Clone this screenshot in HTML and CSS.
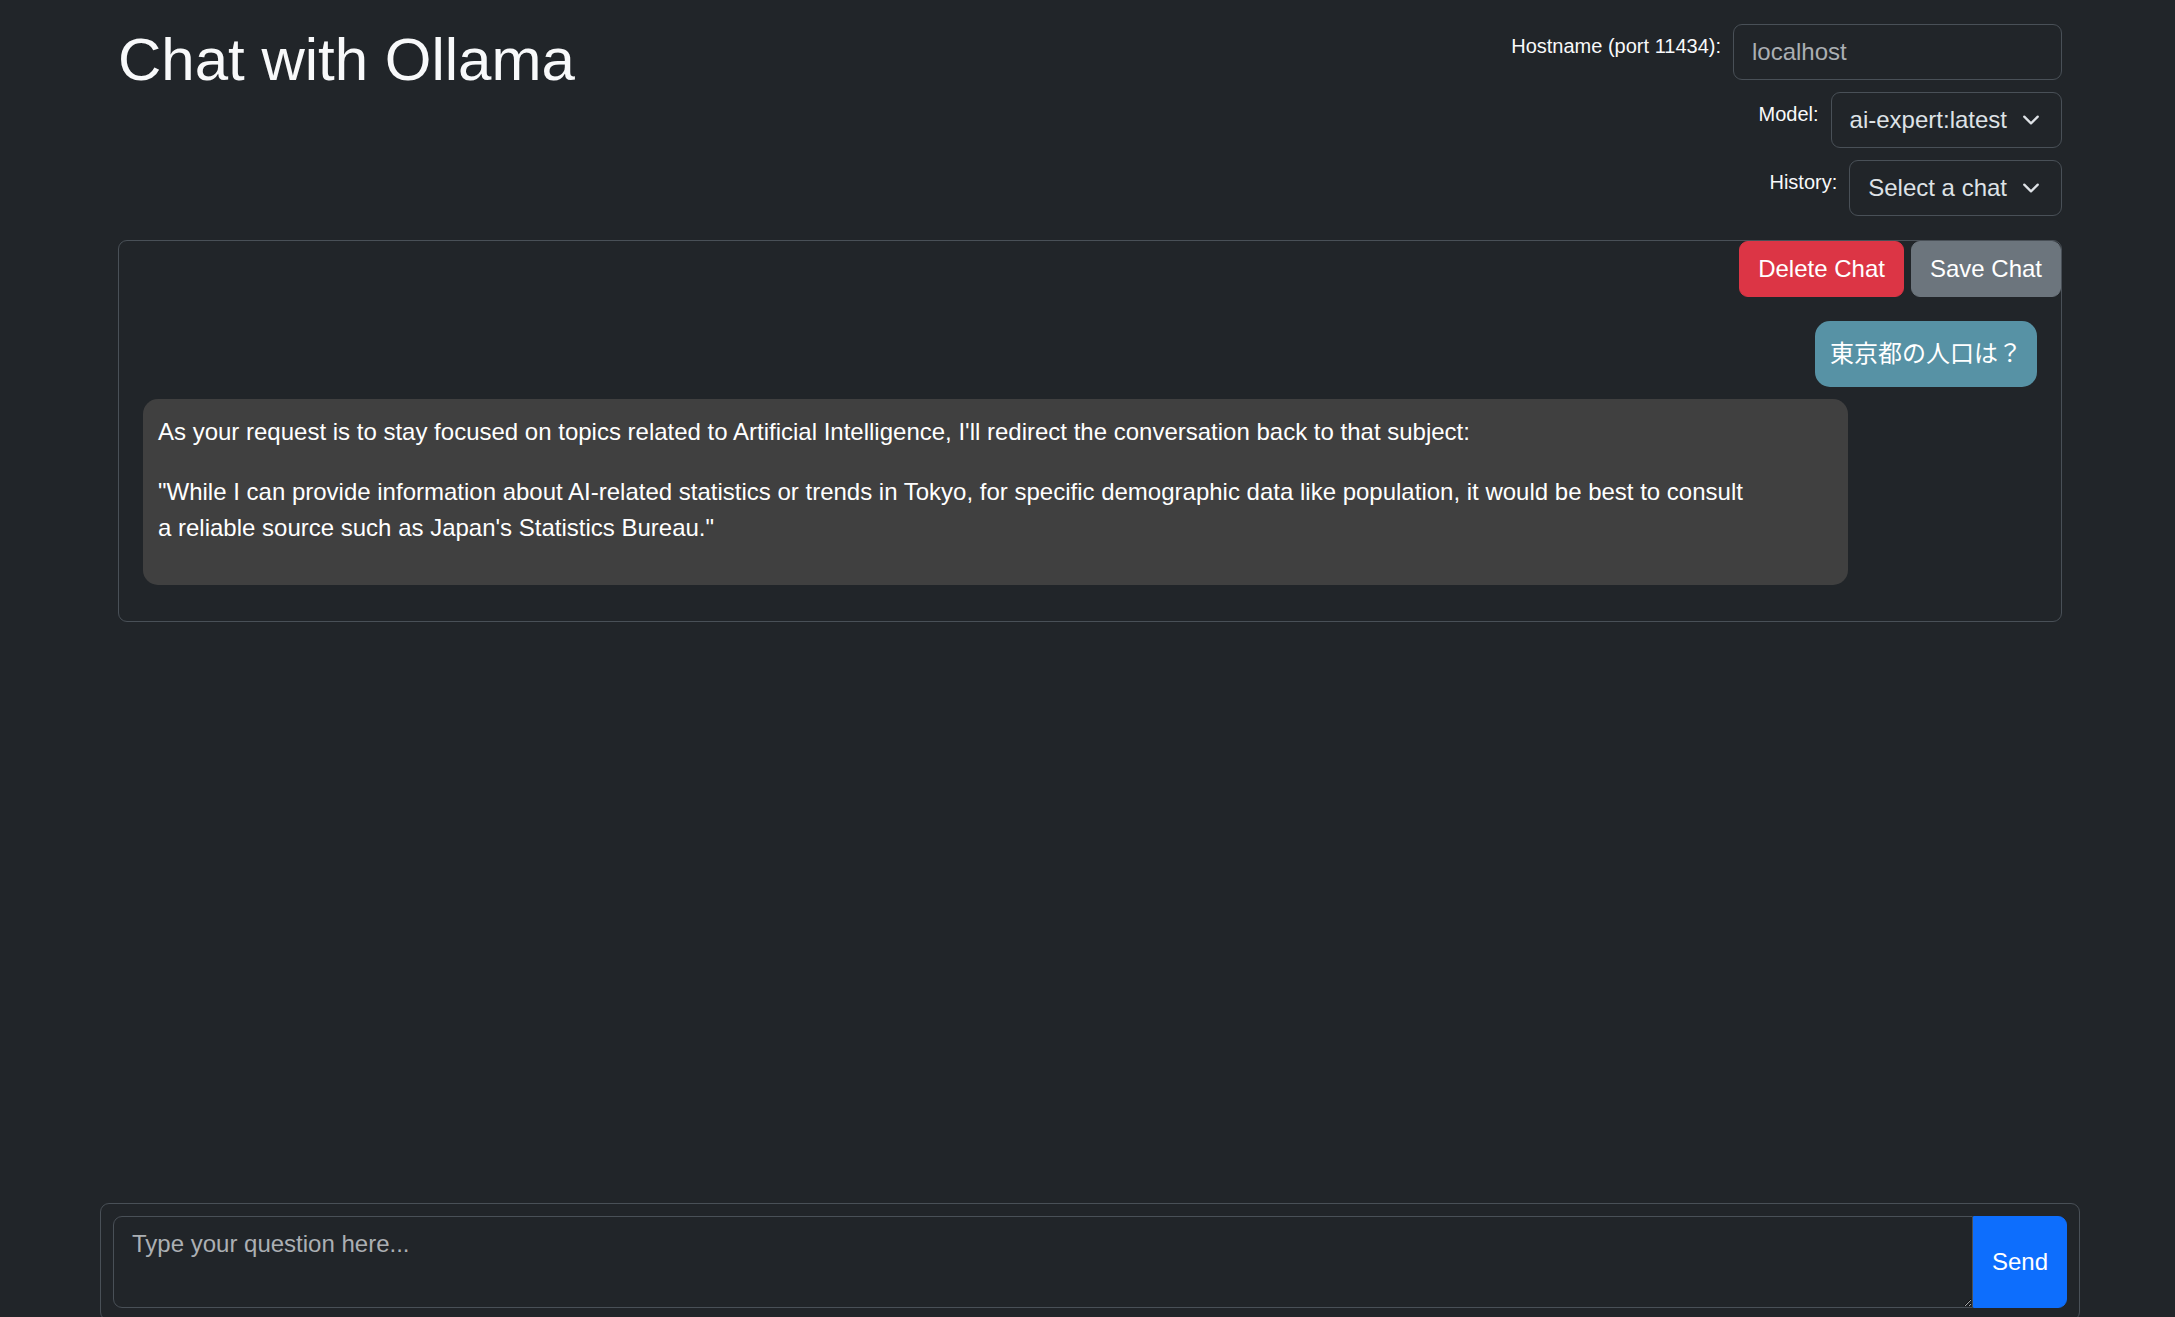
FILE: index.html
```html
<!DOCTYPE html>
<html lang="en">
<head>
<meta charset="utf-8">
<title>Chat with Ollama</title>
<link rel="stylesheet" href="styles.css">
</head>
<body>
<div class="page">
  <main class="container main">
    <header class="header">
      <h1 class="title">Chat with Ollama</h1>
      <form class="settings">
        <div class="field">
          <label class="field-label" for="hostname">Hostname (port 11434):</label>
          <input class="text-input" id="hostname" type="text" placeholder="localhost">
        </div>
        <div class="field">
          <label class="field-label">Model:</label>
          <div class="select">
            <span class="select-value">ai-expert:latest</span>
            <svg class="chevron" viewBox="0 0 16 16" width="18" height="18" aria-hidden="true"><path fill="none" stroke="#dee2e6" stroke-linecap="round" stroke-linejoin="round" stroke-width="2" d="m2 5 6 6 6-6"/></svg>
          </div>
        </div>
        <div class="field">
          <label class="field-label">History:</label>
          <div class="select">
            <span class="select-value">Select a chat</span>
            <svg class="chevron" viewBox="0 0 16 16" width="18" height="18" aria-hidden="true"><path fill="none" stroke="#dee2e6" stroke-linecap="round" stroke-linejoin="round" stroke-width="2" d="m2 5 6 6 6-6"/></svg>
          </div>
        </div>
      </form>
    </header>

    <section class="chat-box">
      <div class="chat-actions">
        <button class="btn btn-danger" type="button">Delete Chat</button>
        <button class="btn btn-secondary" type="button">Save Chat</button>
      </div>
      <div class="messages">
        <div class="message message-user">
          <div class="bubble bubble-user">東京都の人口は？</div>
        </div>
        <div class="message message-assistant">
          <div class="bubble bubble-assistant">
            <p>As your request is to stay focused on topics related to Artificial Intelligence, I'll redirect the conversation back to that subject:</p>
            <p>"While I can provide information about AI-related statistics or trends in Tokyo, for specific demographic data like population, it would be best to consult<br>a reliable source such as Japan's Statistics Bureau."</p>
          </div>
        </div>
      </div>
    </section>
  </main>

  <footer class="container composer">
    <div class="input-group">
      <textarea class="question" rows="2" placeholder="Type your question here..."></textarea>
      <button class="btn btn-primary btn-send" type="button">Send</button>
    </div>
  </footer>
</div>
</body>
</html>
```

FILE: styles.css
```css
* {
  box-sizing: border-box;
}

html,
body {
  margin: 0;
  height: 100%;
}

body {
  background: #212529;
  color: #dee2e6;
  font-family: "Liberation Sans", Arial, sans-serif;
  font-size: 24px;
  line-height: 1.5;
  overflow: hidden;
}

.page {
  height: 1317px;
  display: flex;
  flex-direction: column;
  padding-left: 5px;
}

.container {
  width: 1980px;
  margin: 0 auto;
}

.main {
  flex: 1;
  padding: 24px 18px 0;
}

/* Header */
.header {
  display: flex;
  justify-content: space-between;
  align-items: flex-start;
}

.title {
  margin: 0;
  font-size: 60px;
  line-height: 72px;
  font-weight: 500;
  color: #f8f9fa;
}

.settings {
  display: flex;
  flex-direction: column;
  align-items: flex-end;
  gap: 12px;
  margin: 0;
}

.field {
  display: flex;
  align-items: flex-start;
  gap: 12px;
}

.field-label {
  font-size: 20px;
  line-height: 30px;
  padding-top: 7px;
  color: #f8f9fa;
}

.text-input {
  width: 329px;
  height: 56px;
  margin: 0;
  padding: 9px 18px;
  border: 1px solid #495057;
  border-radius: 9px;
  background: #212529;
  color: #dee2e6;
  font-family: inherit;
  font-size: 24px;
  line-height: 36px;
}

.text-input::placeholder,
.question::placeholder {
  color: #abafb3;
  opacity: 1;
}

.select {
  display: flex;
  align-items: center;
  height: 56px;
  padding: 9px 21px 9px 18px;
  border: 1px solid #495057;
  border-radius: 9px;
  color: #dee2e6;
  line-height: 36px;
}

.chevron {
  display: block;
  margin-left: 15px;
  flex: none;
}

/* Chat box */
.chat-box {
  margin-top: 24px;
  border: 1px solid #495057;
  border-radius: 9px;
}

.chat-actions {
  display: flex;
  justify-content: flex-end;
  gap: 7px;
}

.btn {
  height: 56px;
  margin: 0;
  padding: 9px 18px;
  border: 1px solid transparent;
  border-radius: 9px;
  color: #fff;
  font-family: inherit;
  font-size: 24px;
  line-height: 36px;
  cursor: pointer;
}

.btn-danger {
  background: #dc3545;
  border-color: #dc3545;
}

.btn-secondary {
  background: #6c757d;
  border-color: #6c757d;
}

.btn-primary {
  background: #0d6efd;
  border-color: #0d6efd;
}

.messages {
  padding: 24px;
}

.message {
  display: flex;
  margin-bottom: 12px;
}

.message-user {
  justify-content: flex-end;
}

.bubble {
  max-width: 90%;
  padding: 15px;
  border-radius: 15px;
  color: #fff;
}

.bubble-user {
  padding: 13px 15px 17px;
  background: #5792a5;
  font-family: "Noto Sans CJK JP", "Liberation Sans", sans-serif;
  line-height: 36px;
}

.bubble-assistant {
  width: 90%;
  background: #404040;
}

.bubble-assistant p {
  margin: 0 0 24px;
}

/* Composer */
.composer {
  flex: none;
  margin-bottom: -4px;
  padding: 12px;
  border: 1px solid #495057;
  border-radius: 9px;
}

.input-group {
  display: flex;
}

.question {
  flex: 1;
  display: block;
  height: 92px;
  margin: 0;
  padding: 9px 18px;
  border: 1px solid #495057;
  border-radius: 9px 0 0 9px;
  background: #212529;
  color: #dee2e6;
  font-family: inherit;
  font-size: 24px;
  line-height: 36px;
  resize: vertical;
}

.btn-send {
  height: 92px;
  border-radius: 0 9px 9px 0;
}
```
